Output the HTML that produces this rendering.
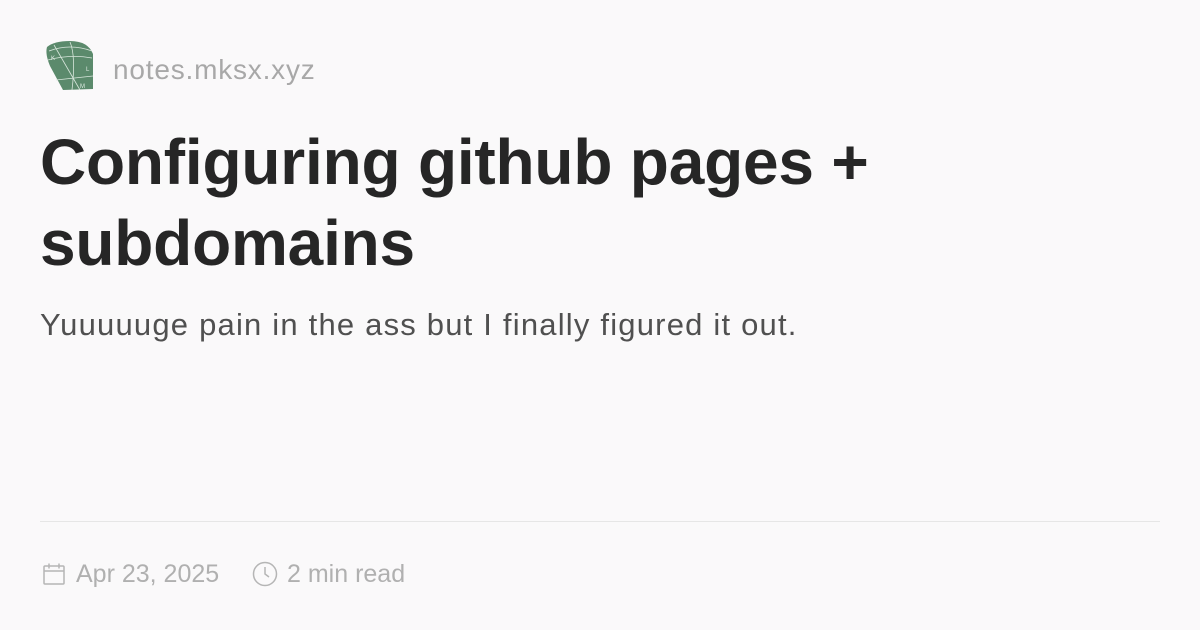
<!DOCTYPE html>
<html><head><meta charset="utf-8"><style>
html,body{margin:0;padding:0}
body{width:1200px;height:630px;background:#faf9fa;font-family:"Liberation Sans",sans-serif;position:relative;overflow:hidden}
.site{position:absolute;left:113px;top:52px;font-size:28px;letter-spacing:0.8px;color:#a8a8a8;line-height:36px}
h1{position:absolute;left:40px;top:122px;margin:0;font-size:64px;line-height:81px;font-weight:700;color:#262626;letter-spacing:-0.2px}
.desc{position:absolute;left:40px;top:305px;font-size:31px;letter-spacing:1.2px;color:#505050;line-height:40px}
.hr{position:absolute;left:40px;right:40px;top:521px;height:1px;background:#e6e6e6}
.meta{position:absolute;top:558px;font-size:25px;color:#b0b0b0;line-height:32px}
</style></head><body>
<svg style="position:absolute;left:40px;top:36px" width="60" height="60" viewBox="0 0 60 60">
<path d="M7 11 Q14 5 30 5 Q48 5 53 18 L53 53 L23 54 L10 30 Q5 18 7 11Z" fill="#5b8a6c"/>
<path d="M9 15 Q30 7 52 15 M8 24 Q30 18 52 22 M16 44 L53 40 M14 9 L40 54 M30 6 Q36 20 32 54" stroke="#d8e6dc" stroke-width="0.8" fill="none"/>
<text x="11" y="24" font-size="6" fill="#e0ece4" font-family="Liberation Sans">K</text>
<text x="46" y="35" font-size="6" fill="#e0ece4" font-family="Liberation Sans">L</text>
<text x="40" y="52" font-size="6" fill="#e0ece4" font-family="Liberation Sans">M</text>
</svg>
<div class="site">notes.mksx.xyz</div>
<h1>Configuring github pages +<br>subdomains</h1>
<div class="desc">Yuuuuuge pain in the ass but I finally figured it out.</div>
<div class="hr"></div>
<svg style="position:absolute;left:42px;top:562px" width="24" height="24" viewBox="0 0 24 24" fill="none" stroke="#b5b5b5" stroke-width="1.5"><rect x="2" y="4" width="20" height="18" rx="1"/><path d="M2 9h20M7 1.5v5M17 1.5v5"/></svg>
<div class="meta" style="left:76px">Apr 23, 2025</div>
<svg style="position:absolute;left:252px;top:561px" width="26" height="26" viewBox="0 0 26 26" fill="none" stroke="#b5b5b5" stroke-width="1.5"><circle cx="13" cy="13" r="11.5"/><path d="M13 6v7l4 3"/></svg>
<div class="meta" style="left:287px">2 min read</div>
</body></html>
